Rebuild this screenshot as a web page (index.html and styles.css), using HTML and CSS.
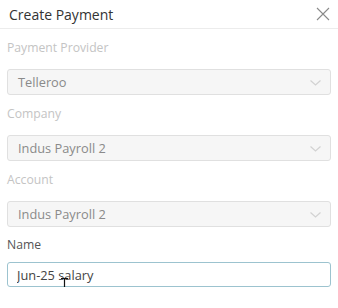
FILE: index.html
```html
<!DOCTYPE html>
<html lang="en">

<head>
	<meta charset="UTF-8">
	<title>Create Payment</title>
	<link rel="stylesheet" href="styles.css">
</head>

<body>
	<div class="dialog">
		<div class="header">
			<span class="title">Create Payment</span>
			<span class="close">
				<svg width="14" height="14" viewBox="0 0 14 14"><path d="M1 1L13 13M13 1L1 13" stroke="#8a8a8a" stroke-width="1.1" fill="none"/></svg>
			</span>
		</div>
		<div class="body">
			<div class="field disabled">
				<label>Payment Provider</label>
				<div class="select">
					<span>Telleroo</span>
					<svg class="chev" width="11" height="6" viewBox="0 0 11 6"><path d="M0.5 0.5L5.5 5L10.5 0.5" stroke="#d2d2d2" stroke-width="1.2" fill="none"/></svg>
				</div>
			</div>
			<div class="field disabled">
				<label>Company</label>
				<div class="select">
					<span>Indus Payroll 2</span>
					<svg class="chev" width="11" height="6" viewBox="0 0 11 6"><path d="M0.5 0.5L5.5 5L10.5 0.5" stroke="#d2d2d2" stroke-width="1.2" fill="none"/></svg>
				</div>
			</div>
			<div class="field disabled">
				<label>Account</label>
				<div class="select">
					<span>Indus Payroll 2</span>
					<svg class="chev" width="11" height="6" viewBox="0 0 11 6"><path d="M0.5 0.5L5.5 5L10.5 0.5" stroke="#d2d2d2" stroke-width="1.2" fill="none"/></svg>
				</div>
			</div>
			<div class="field name">
				<label>Name</label>
				<input type="text" class="text" value="Jun-25 salary">
				<!-- mouse cursor in the shot -->
				<svg class="ibeam" width="9" height="16" viewBox="0 0 9 16"><path d="M1 0.5H8M4.5 0.5V15.5M1 15.5H8" stroke="#111" stroke-width="1.2" fill="none"/></svg>
			</div>
		</div>
	</div>
</body>

</html>
```

FILE: styles.css
```css
* {
	margin: 0;
	padding: 0;
	box-sizing: border-box;
}

body {
	background: #fff;
	font-family: "Open Sans", "Noto Sans", sans-serif;
	color: #333;
}

.dialog {
	width: 338px;
}

.header {
	height: 29px;
	display: flex;
	align-items: center;
	justify-content: space-between;
	padding: 0 8px 0 9px;
	border-bottom: 1px solid #ececec;
}

.title {
	font-size: 14px;
	color: #333;
}

.close {
	display: flex;
	margin-top: -1px;
}

.body {
	padding: 0 7px;
}

.field label {
	display: block;
	font-size: 12.2px;
	line-height: 18px;
	margin-top: 10px;
	margin-bottom: 12px;
	color: #555;
}

.field.disabled label {
	color: #c4c4c4;
}

.select {
	height: 26px;
	border: 1px solid #e0e0e0;
	border-radius: 3px;
	background: #f6f6f6;
	display: flex;
	align-items: center;
	justify-content: space-between;
	padding: 0 9px 0 10px;
	font-size: 12.8px;
	color: #8a8a8a;
}

.chev {
	margin-top: 1px;
}

.name {
	position: relative;
}

.name label {
	margin-top: 9px;
	margin-bottom: 8px;
}

.text {
	display: block;
	width: 100%;
	height: 25px;
	border: 1px solid #9cc3cf;
	border-radius: 3px;
	padding: 0 9px;
	font-family: "Open Sans", "Noto Sans", sans-serif;
	font-size: 12.8px;
	color: #444;
	outline: none;
}

.ibeam {
	position: absolute;
	left: 53px;
	top: 42px;
}
```
